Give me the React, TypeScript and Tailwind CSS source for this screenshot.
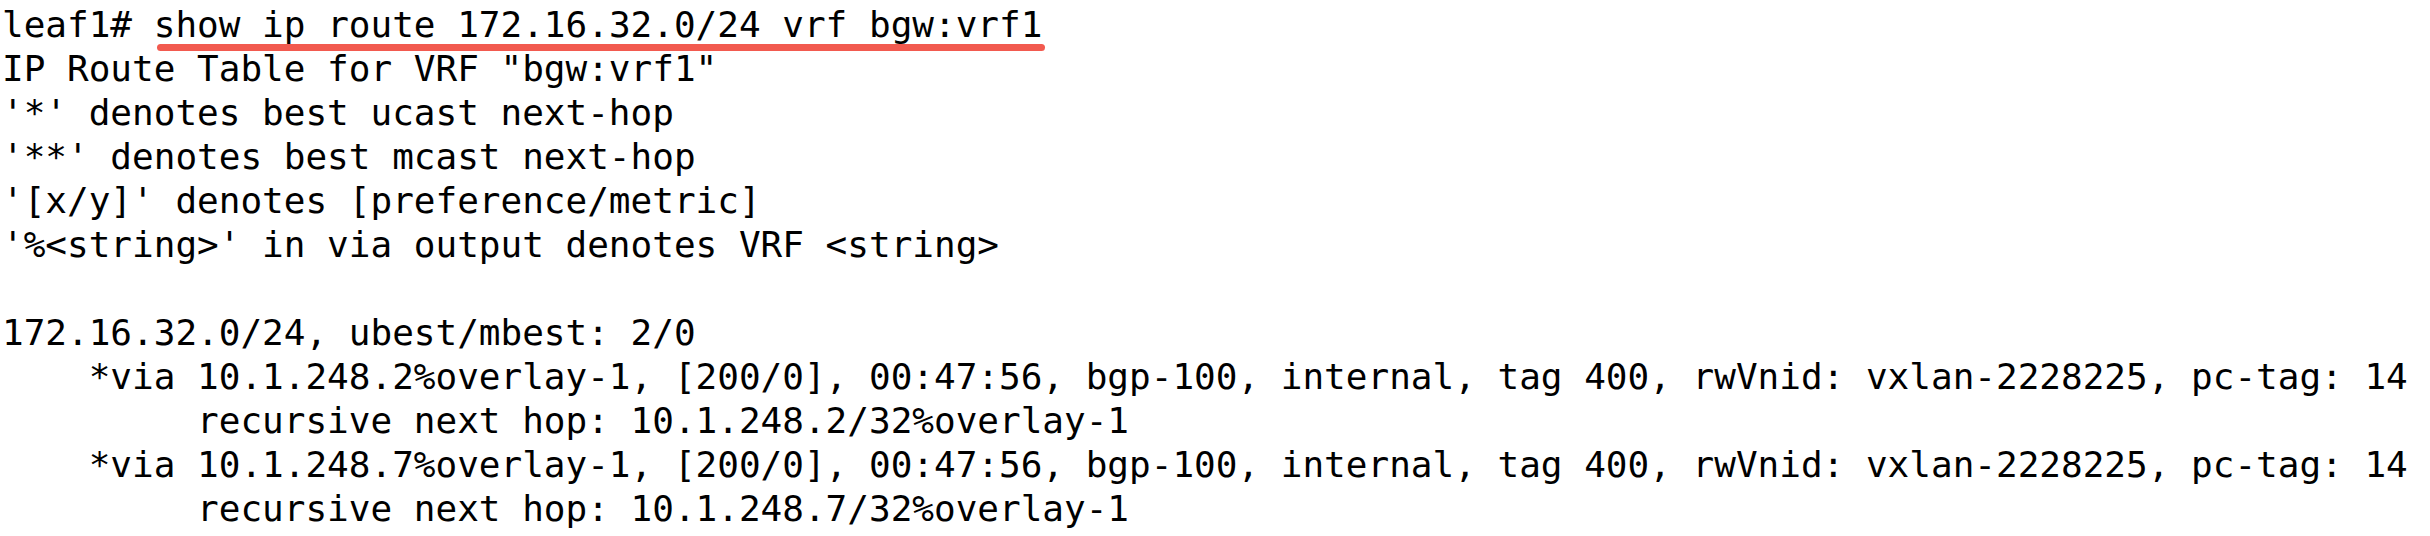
const lines: string[] = [
  `IP Route Table for VRF "bgw:vrf1"`,
  `'*' denotes best ucast next-hop`,
  `'**' denotes best mcast next-hop`,
  `'[x/y]' denotes [preference/metric]`,
  `'%<string>' in via output denotes VRF <string>`,
  ``,
  `172.16.32.0/24, ubest/mbest: 2/0`,
  `    *via 10.1.248.2%overlay-1, [200/0], 00:47:56, bgp-100, internal, tag 400, rwVnid: vxlan-2228225, pc-tag: 14`,
  `         recursive next hop: 10.1.248.2/32%overlay-1`,
  `    *via 10.1.248.7%overlay-1, [200/0], 00:47:56, bgp-100, internal, tag 400, rwVnid: vxlan-2228225, pc-tag: 14`,
  `         recursive next hop: 10.1.248.7/32%overlay-1`,
];

export default function App() {
  return (
    <div className="h-[536px] w-[2430px] overflow-hidden bg-white">
      <pre className="m-0 pl-[2px] pt-[3px] font-['DejaVu_Sans_Mono','Liberation_Mono',monospace] text-[36px] leading-[44px] text-black">
        <div>
          leaf1#{" "}
          <span className="relative">
            show ip route 172.16.32.0/24 vrf bgw:vrf1
            {/* red marker under the command */}
            <span className="absolute left-[3px] right-[-3px] top-[40px] h-[7px] rounded-full bg-[#f25a4f]" />
          </span>
        </div>
        {lines.map((l, i) => (
          <div key={i}>{l === "" ? "\u00a0" : l}</div>
        ))}
      </pre>
    </div>
  );
}
